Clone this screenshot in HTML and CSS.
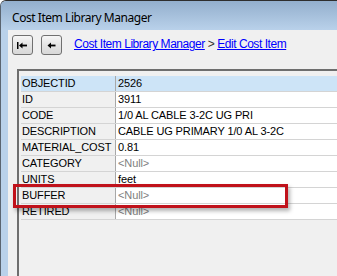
FILE: index.html
```html
<!DOCTYPE html>
<html>
<head>
    <title>Cost Item Library Manager</title>
    <link rel="stylesheet" href="styles.css">
</head>
<body>
    <div class="window">
        <div class="titlebar">Cost Item Library Manager</div>

        <div class="frame">
            <div class="client">
                <div class="toolbar">
                    <button class="nav-button" title="First">
                        <svg width="11" height="7" viewBox="0 0 11 7">
                            <rect x="0" y="0" width="1.5" height="7" fill="#000"/>
                            <polygon points="2,3.5 5.5,0.5 5.5,6.5" fill="#000"/>
                            <rect x="5" y="2.6" width="5" height="1.8" fill="#000"/>
                        </svg>
                    </button>
                    <button class="nav-button" title="Back">
                        <svg width="9" height="7" viewBox="0 0 9 7">
                            <polygon points="0.5,3.5 4,0.5 4,6.5" fill="#000"/>
                            <rect x="3.5" y="2.6" width="5" height="1.8" fill="#000"/>
                        </svg>
                    </button>
                    <div class="crumbs">
                        <a href="#">Cost Item Library Manager</a>
                        <span class="sep">&gt;</span>
                        <a href="#">Edit Cost Item</a>
                    </div>
                </div>

                <div class="panel">
                    <div class="grid">
                        <div class="row selected"><div class="label">OBJECTID</div><div class="value">2526</div></div>
                        <div class="row"><div class="label">ID</div><div class="value">3911</div></div>
                        <div class="row"><div class="label">CODE</div><div class="value">1/0 AL CABLE 3-2C UG PRI</div></div>
                        <div class="row"><div class="label">DESCRIPTION</div><div class="value">CABLE UG PRIMARY 1/0 AL 3-2C</div></div>
                        <div class="row"><div class="label">MATERIAL_COST</div><div class="value">0.81</div></div>
                        <div class="row"><div class="label">CATEGORY</div><div class="value null">&lt;Null&gt;</div></div>
                        <div class="row"><div class="label">UNITS</div><div class="value">feet</div></div>
                        <div class="row"><div class="label">BUFFER</div><div class="value null">&lt;Null&gt;</div></div>
                        <div class="row"><div class="label">RETIRED</div><div class="value null">&lt;Null&gt;</div></div>
                    </div>
                </div>
            </div>
        </div>

        <div class="callout"></div>
    </div>
</body>
</html>
```

FILE: styles.css
```css
body {
    margin: 0;
    padding: 0;
    background-color: #ffffff;
    font-family: "Liberation Sans", Arial, sans-serif;
}

.window {
    position: relative;
    width: 337px;
    height: 276px;
    display: flex;
    flex-direction: column;
    overflow: hidden;
    border-top: 1px solid #2e2e2e;
    border-left: 1px solid #5a6470;
    border-top-left-radius: 6px;
    box-sizing: border-box;
    background-color: #b9d1ea;
}

.titlebar {
    height: 29px;
    flex: none;
    padding-left: 11px;
    box-sizing: border-box;
    background: linear-gradient(#93afcd, #b9d1ea);
    font-family: "Noto Sans", sans-serif;
    font-size: 12px;
    letter-spacing: -0.45px;
    line-height: 29px;
    color: #000;
    padding-top: 2px;
}

.frame {
    flex: 1;
    display: flex;
    padding-left: 7px;
    border-left: 1px solid #e4ecf5;
    margin-left: -1px;
}

.client {
    flex: 1;
    display: flex;
    flex-direction: column;
    background-color: #f0f0f0;
}

.toolbar {
    height: 39px;
    flex: none;
    display: flex;
    align-items: flex-start;
    padding: 5px 0 0 4px;
    box-sizing: border-box;
}

    .nav-button {
        width: 21px;
        height: 20px;
        margin-right: 8px;
        padding: 0;
        border: 1px solid #707070;
        border-radius: 3px;
        background: linear-gradient(#f6f6f6, #e4e4e4 50%, #d8d8d8);
        display: flex;
        align-items: center;
        justify-content: center;
    }

    .crumbs {
        margin-left: 4px;
        margin-top: 2px;
        font-size: 12px;
        letter-spacing: -0.45px;
        color: #333;
        white-space: nowrap;
    }

    .crumbs a {
        color: #0000ff;
    }

.panel {
    flex: 1;
    margin-left: 9px;
    border-top: 2px solid #6e6e6e;
    border-left: 2px solid #6e6e6e;
    padding: 5px 0 0 2px;
}

.grid {
    font-size: 11px;
    letter-spacing: -0.12px;
    color: #000;
}

.row {
    display: flex;
    height: 16px;
    box-sizing: border-box;
    border-bottom: 1px solid #d4d4d4;
}

    .row .label {
        width: 95px;
        flex: none;
        padding-left: 1px;
        box-sizing: border-box;
        border-right: 1px solid #a8a8a8;
        line-height: 15px;
        background-color: #f0f0f0;
        white-space: nowrap;
        overflow: hidden;
    }

    .row .value {
        flex: 1;
        padding-left: 2px;
        line-height: 15px;
        background-color: #ffffff;
        white-space: nowrap;
    }

    .row .null {
        color: #808080;
    }

    .row.selected .label,
    .row.selected .value {
        background-color: #cde4f7;
    }

.callout {
    position: absolute;
    left: 12px;
    top: 183px;
    width: 275px;
    height: 24px;
    box-sizing: border-box;
    border: 3px solid #c0121b;
    box-shadow: 2px 3px 4px rgba(0, 0, 0, 0.3);
}
```
